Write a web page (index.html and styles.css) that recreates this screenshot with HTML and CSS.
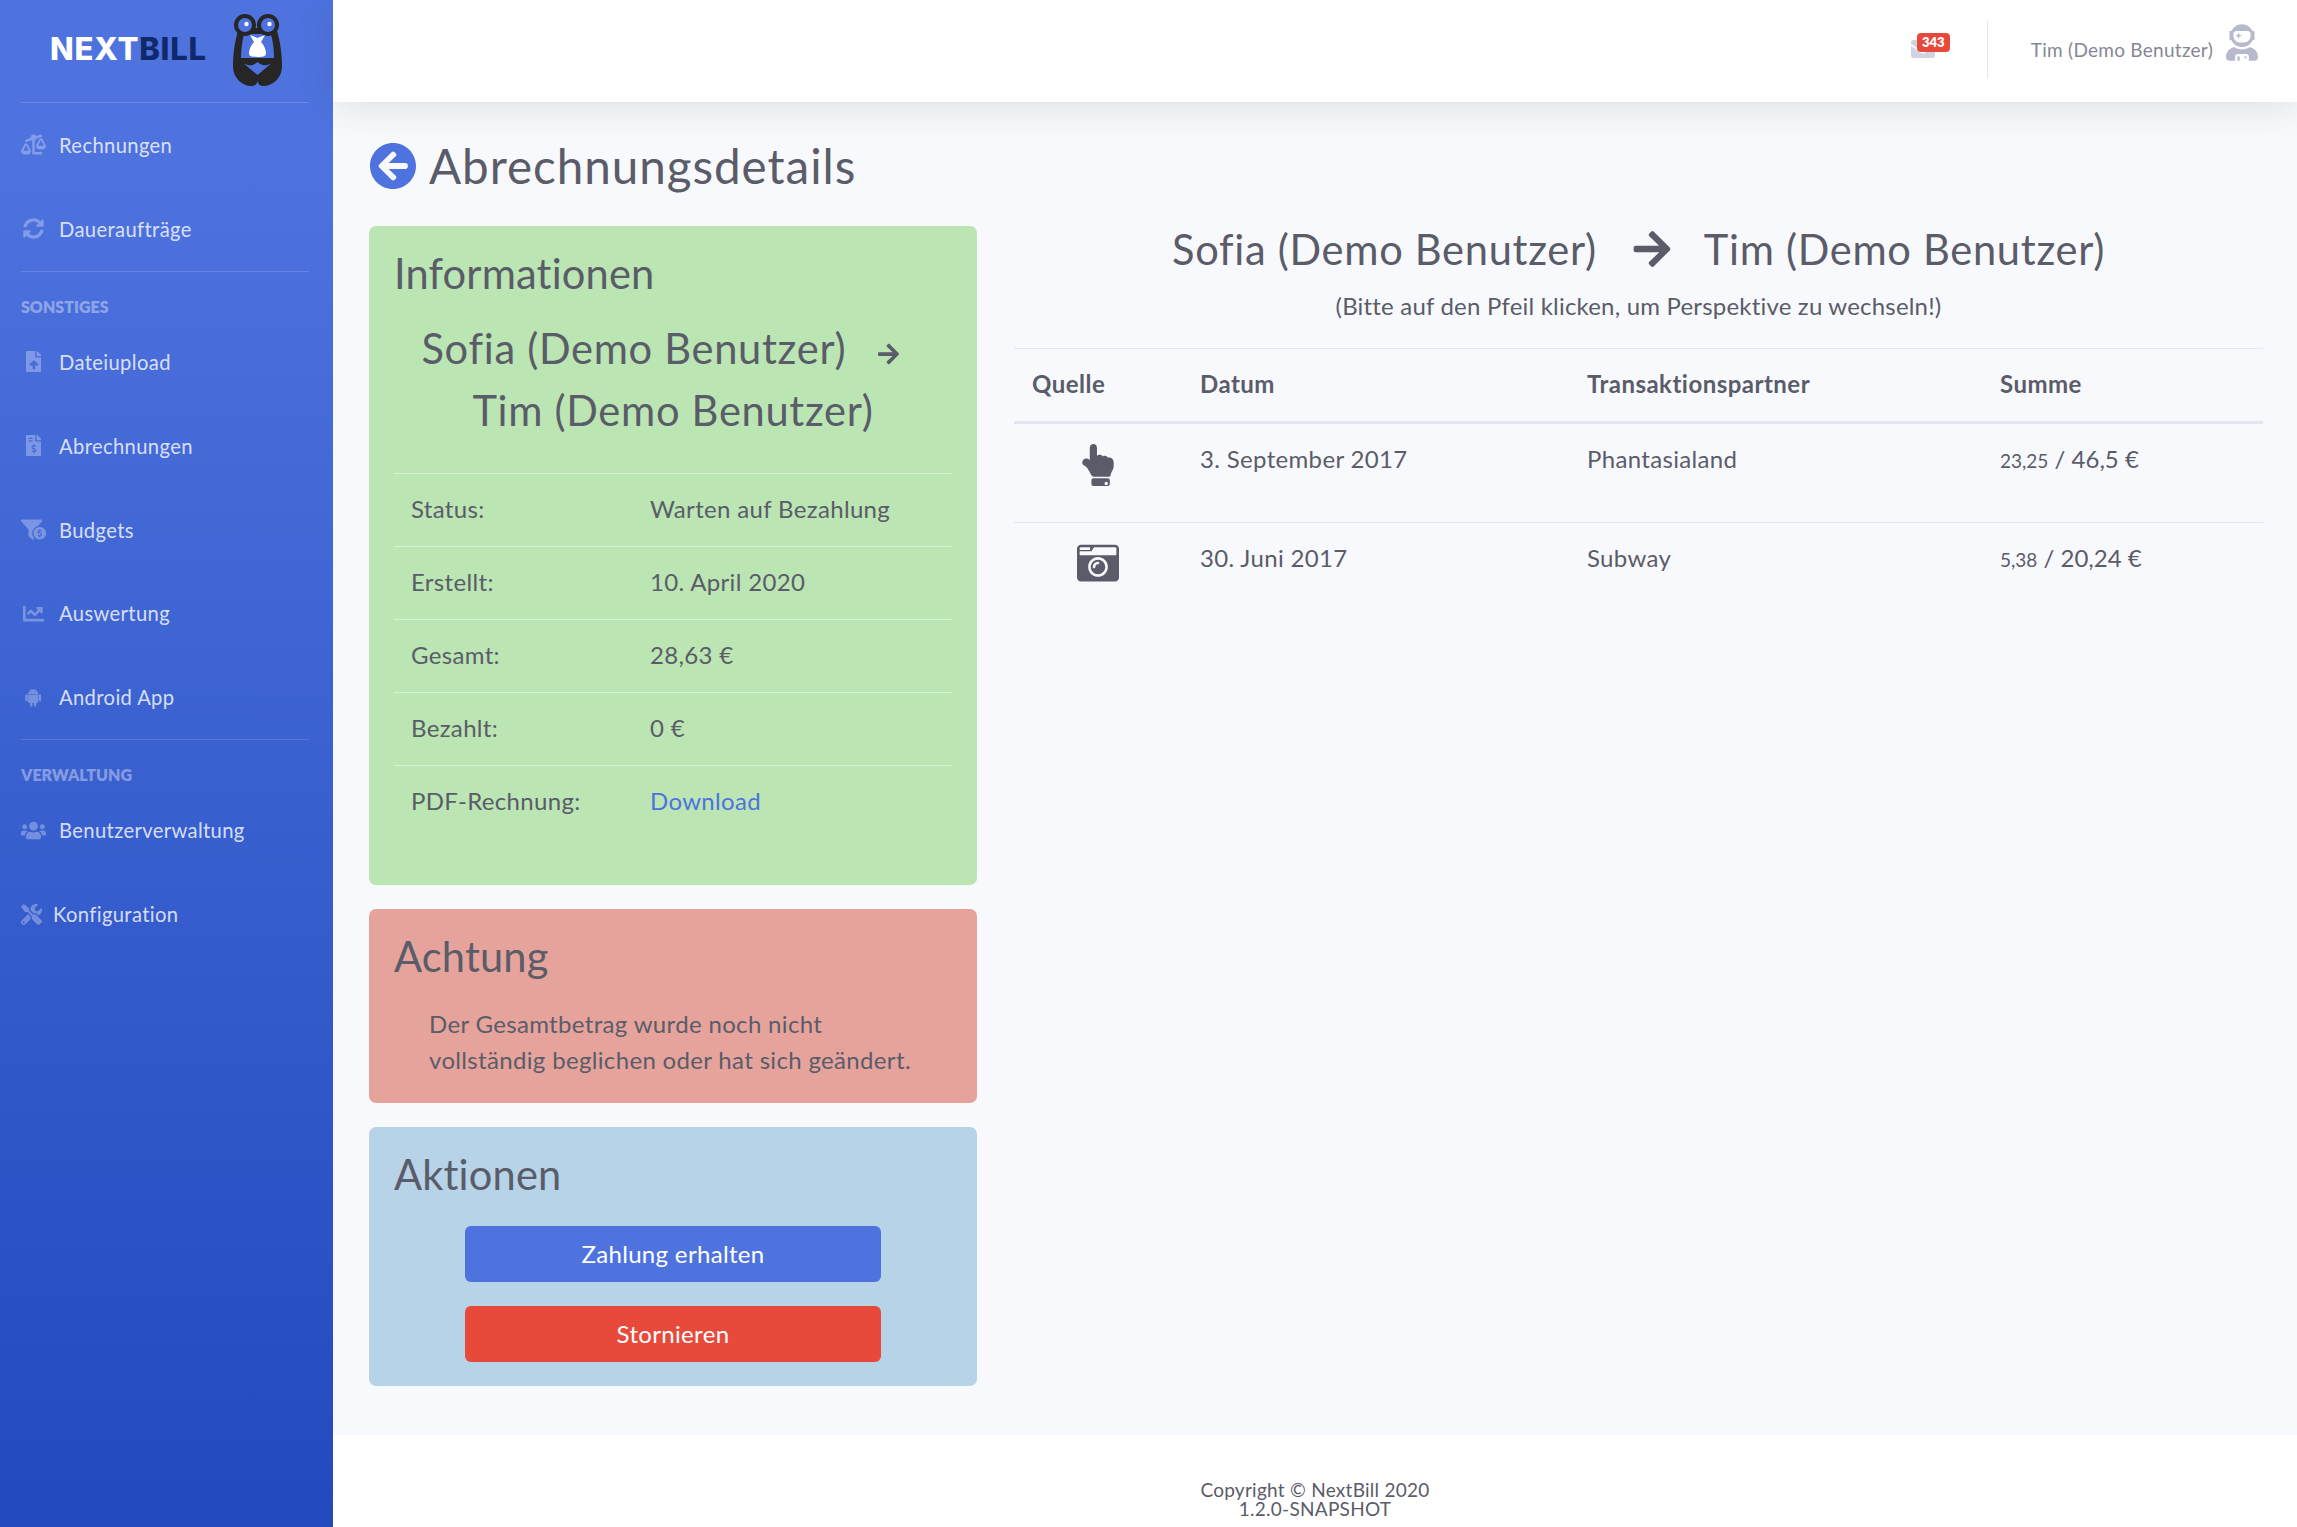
FILE: index.html
```html
<!DOCTYPE html>
<html lang="de">
<head>
  <meta charset="UTF-8">
  <meta name="viewport" content="width=device-width, initial-scale=1.0">
  <title>NextBill - Abrechnungsdetails</title>
  <link rel="stylesheet" href="styles.css">
</head>
<body>
  <div class="wrapper">
    <aside class="sidebar">
      <a class="brand" href="#">
        <span class="brand-text">NEXT<span class="brand-dark">BILL</span></span>
        <svg class="brand-logo" viewBox="0 0 49 72">
          <path class="logo-dark" d="M6 14C1 28 0 44 0 52c0 12 9 20 19 20 3 0 5-2 5.500-5 .5 3 2.500 5 5.500 5 10 0 19-8 19-20 0-8-1-24-6-38z"/>
          <path class="logo-blue" d="M11 20h27c2 8 3 16 3 24l-1 4-15.500 13L9 48l-1-4c0-8 1-16 3-24z"/>
          <path class="logo-dark" d="M6 44h37l1 4-10 3c-4 1-7-1-9.500-3-2.500 2-5.500 4-9.500 3L5 48z"/>
          <circle class="logo-dark" cx="12" cy="11" r="11"/>
          <circle class="logo-dark" cx="35" cy="11" r="11"/>
          <circle class="logo-blue" cx="12" cy="11" r="7"/>
          <circle class="logo-blue" cx="35" cy="11" r="7"/>
          <circle class="logo-white" cx="13.500" cy="10" r="2.200"/>
          <circle class="logo-white" cx="36.500" cy="10" r="2.200"/>
          <path class="logo-white" d="M17 21l7.500 3 7.500-3-4 7c3 3 5 8 5 11 0 3-2 4-8.500 4S16 42 16 39c0-3 2-8 5-11z"/>
        </svg>
      </a>
      <hr class="side-divider">
      <a class="nav-link" href="#">
        <span class="nav-icon">
          <svg viewBox="0 0 640 512"><path d="M528 448H352V153.250c20.420-8.940 36.100-26.220 43.380-47.470l132-44.260c8.380-2.810 12.890-11.880 10.080-20.260l-10.170-30.340C524.480 2.540 515.410-1.970 507.030.84L389.110 40.370C375.300 16.360 349.690 0 320 0c-44.180 0-80 35.820-80 80 0 3.430.59 6.710 1.010 10.030l-128.390 43.050c-8.380 2.810-12.890 11.880-10.080 20.260l10.170 30.340c2.810 8.380 11.880 12.890 20.260 10.080l142.050-47.630c4.070 2.770 8.430 5.120 12.990 7.120V496c0 8.840 7.160 16 16 16h224c8.840 0 16-7.160 16-16v-32c-.01-8.840-7.170-16-16.010-16zm111.980-144c0-16.180 1.340-8.730-85.050-181.510-17.650-35.290-68.190-35.360-85.870 0-87.120 174.260-85.040 165.840-85.040 181.510H384c0 44.180 57.310 80 128 80s128-35.820 128-80h-.02zM440 288l72-144 72 144H440zm-269.070-37.510c-17.650-35.290-68.190-35.360-85.870 0C-2.060 424.750.02 416.330.02 432H0c0 44.180 57.310 80 128 80s128-35.820 128-80h-.02c0-16.180 1.340-8.730-85.050-181.510zM56 416l72-144 72 144H56z"/></svg>
        </span>
        Rechnungen
      </a>
      <a class="nav-link" href="#">
        <span class="nav-icon">
          <svg viewBox="0 0 512 512"><path d="M370.720 133.280C339.458 104.008 298.888 87.962 255.848 88c-77.458.068-144.328 53.178-162.791 126.850-1.344 5.363-6.122 9.150-11.651 9.150H24.103c-7.498 0-13.194-6.807-11.807-14.176C33.933 94.924 134.813 8 256 8c66.448 0 126.791 26.136 171.315 68.685L463.030 40.970C478.149 25.851 504 36.559 504 57.941V192c0 13.255-10.745 24-24 24H345.941c-21.382 0-32.090-25.851-16.971-40.971l41.750-41.749zM32 296h134.059c21.382 0 32.090 25.851 16.971 40.971l-41.750 41.750c31.262 29.273 71.835 45.319 114.876 45.280 77.418-.07 144.315-53.144 162.787-126.849 1.344-5.363 6.122-9.150 11.651-9.150h57.304c7.498 0 13.194 6.807 11.807 14.176C478.067 417.076 377.187 504 256 504c-66.448 0-126.791-26.136-171.315-68.685L48.970 471.030C33.851 486.149 8 475.441 8 454.059V320c0-13.255 10.745-24 24-24z"/></svg>
        </span>
        Daueraufträge
      </a>
      <hr class="side-divider">
      <div class="side-heading">Sonstiges</div>
      <a class="nav-link" href="#">
        <span class="nav-icon">
          <svg viewBox="0 0 384 512"><path d="M224 136V0H24C10.700 0 0 10.700 0 24v464c0 13.300 10.700 24 24 24h336c13.300 0 24-10.700 24-24V160H248c-13.200 0-24-10.800-24-24zm65.180 216.010H224v80c0 8.840-7.160 16-16 16h-32c-8.840 0-16-7.160-16-16v-80H94.820c-14.280 0-21.410-17.290-11.270-27.360l96.420-95.700c6.650-6.610 17.390-6.610 24.040 0l96.420 95.700c10.150 10.070 3.030 27.360-11.250 27.360zM377 105L279.100 7c-4.500-4.500-10.600-7-17-7H256v128h128v-6.100c0-6.300-2.500-12.400-7-16.900z"/></svg>
        </span>
        Dateiupload
      </a>
      <a class="nav-link" href="#">
        <span class="nav-icon">
          <svg viewBox="0 0 384 512"><path d="M377 105L279.100 7c-4.500-4.500-10.600-7-17-7H256v128h128v-6.100c0-6.300-2.500-12.400-7-16.900zm-153 31V0H24C10.700 0 0 10.700 0 24v464c0 13.300 10.700 24 24 24h336c13.300 0 24-10.700 24-24V160H248c-13.200 0-24-10.800-24-24zM64 72c0-4.420 3.580-8 8-8h80c4.420 0 8 3.580 8 8v16c0 4.420-3.580 8-8 8H72c-4.420 0-8-3.580-8-8V72zm0 80v-16c0-4.420 3.580-8 8-8h80c4.420 0 8 3.580 8 8v16c0 4.420-3.580 8-8 8H72c-4.420 0-8-3.580-8-8zm144 263.880V440c0 4.420-3.580 8-8 8h-16c-4.420 0-8-3.580-8-8v-24.290c-11.290-.58-22.270-4.520-31.370-11.350-3.900-2.930-4.100-8.770-.57-12.140l11.750-11.210c2.770-2.640 6.890-2.760 10.130-.73 3.870 2.420 8.260 3.720 12.820 3.720h28.110c6.500 0 11.800-5.920 11.800-13.190 0-5.950-3.610-11.190-8.770-12.730l-45-13.500c-18.590-5.580-31.580-23.420-31.580-43.390 0-24.520 19.050-44.440 42.670-45.070V232c0-4.420 3.580-8 8-8h16c4.420 0 8 3.580 8 8v24.290c11.290.58 22.270 4.510 31.370 11.350 3.900 2.930 4.100 8.770.57 12.140l-11.750 11.210c-2.770 2.640-6.890 2.760-10.130.73-3.870-2.430-8.260-3.720-12.820-3.720h-28.110c-6.500 0-11.800 5.920-11.800 13.190 0 5.950 3.610 11.190 8.770 12.730l45 13.500c18.590 5.580 31.580 23.420 31.580 43.390 0 24.530-19.050 44.440-42.670 45.070z"/></svg>
        </span>
        Abrechnungen
      </a>
      <a class="nav-link" href="#">
        <span class="nav-icon">
          <svg viewBox="0 0 640 512"><path d="M433.460 165.940l101.200-111.870C554.610 34.120 540.480 0 512.260 0H31.740C3.520 0-10.610 34.120 9.340 54.070L192 256v155.920c0 12.590 5.930 24.440 16 32l79.990 60c20.860 15.640 48.470 6.970 59.220-13.570C310.800 455.380 288 406.350 288 352c0-89.790 62.050-165.170 145.460-186.060zM480 192c-88.370 0-160 71.630-160 160s71.630 160 160 160 160-71.630 160-160-71.630-160-160-160zm16 239.880V448c0 4.420-3.580 8-8 8h-16c-4.420 0-8-3.580-8-8v-16.290c-11.290-.58-22.270-4.520-31.370-11.350-3.900-2.930-4.100-8.770-.57-12.140l11.750-11.210c2.770-2.640 6.890-2.760 10.130-.73 3.870 2.420 8.260 3.720 12.820 3.720h28.110c6.500 0 11.800-5.920 11.800-13.190 0-5.950-3.610-11.190-8.770-12.730l-45-13.500c-18.590-5.580-31.580-23.420-31.580-43.390 0-24.520 19.050-44.440 42.670-45.070V256c0-4.420 3.580-8 8-8h16c4.420 0 8 3.580 8 8v16.290c11.290.58 22.270 4.510 31.370 11.350 3.900 2.930 4.100 8.770.57 12.140l-11.750 11.210c-2.770 2.640-6.890 2.760-10.130.73-3.870-2.430-8.260-3.720-12.820-3.720h-28.110c-6.500 0-11.800 5.920-11.800 13.190 0 5.950 3.610 11.190 8.770 12.730l45 13.500c18.590 5.580 31.580 23.420 31.580 43.390 0 24.530-19.050 44.440-42.670 45.070z"/></svg>
        </span>
        Budgets
      </a>
      <a class="nav-link" href="#">
        <span class="nav-icon">
          <svg viewBox="0 0 512 512"><path d="M496 384H64V80c0-8.840-7.160-16-16-16H16C7.160 64 0 71.160 0 80v336c0 17.670 14.330 32 32 32h464c8.840 0 16-7.160 16-16v-32c0-8.840-7.160-16-16-16zM464 96H345.940c-21.380 0-32.090 25.850-16.970 40.970l32.400 32.400L288 242.750l-73.370-73.370c-12.500-12.500-32.760-12.500-45.250 0l-68.690 68.690c-6.250 6.250-6.250 16.380 0 22.630l22.620 22.620c6.250 6.250 16.380 6.250 22.630 0L192 237.250l73.370 73.370c12.500 12.500 32.760 12.500 45.250 0l96-96 32.400 32.400c15.120 15.120 40.970 4.410 40.970-16.970V112c.01-8.840-7.150-16-15.990-16z"/></svg>
        </span>
        Auswertung
      </a>
      <a class="nav-link" href="#">
        <span class="nav-icon">
          <svg viewBox="0 0 448 512"><path d="M89.600 204.500v115.800c0 15.400-12.100 27.700-27.500 27.700-15.300 0-30.100-12.400-30.100-27.700V204.500c0-15.100 14.800-27.500 30.100-27.500 15.100 0 27.500 12.400 27.500 27.500zm10.800 157c0 16.400 13.200 29.600 29.600 29.600h19.900l.3 61.100c0 36.900 55.200 36.600 55.200 0v-61.100h37.200v61.100c0 36.700 55.500 36.800 55.500 0v-61.100h20.200c16.200 0 29.400-13.200 29.400-29.600V182.100H100.400v179.400zm248-189.100H99.300c0-42.800 25.600-80 63.600-99.400l-19.100-35.300c-2.800-4.900 4.300-8 6.700-3.800l19.400 35.600c34.900-15.500 75-14.700 108.300 0L297.500 34c2.500-4.300 9.500-1.100 6.700 3.800L285.100 73c37.700 19.400 63.300 56.600 63.300 99.400zm-170.700-55.500c0-5.700-4.600-10.500-10.500-10.500-5.700 0-10.200 4.800-10.200 10.500s4.600 10.500 10.200 10.500c5.900 0 10.500-4.800 10.500-10.500zm113.400 0c0-5.700-4.600-10.500-10.200-10.500-5.900 0-10.500 4.800-10.500 10.500s4.600 10.500 10.500 10.500c5.600 0 10.200-4.800 10.200-10.500zm94.800 60.100c-15.100 0-27.500 12.100-27.500 27.500v115.800c0 15.400 12.400 27.700 27.500 27.700 15.400 0 30.100-12.400 30.100-27.700V204.500c0-15.400-14.800-27.500-30.100-27.500z"/></svg>
        </span>
        Android App
      </a>
      <hr class="side-divider">
      <div class="side-heading">Verwaltung</div>
      <a class="nav-link" href="#">
        <span class="nav-icon">
          <svg viewBox="0 0 640 512"><path d="M96 224c35.300 0 64-28.700 64-64s-28.700-64-64-64-64 28.700-64 64 28.700 64 64 64zm448 0c35.300 0 64-28.700 64-64s-28.700-64-64-64-64 28.700-64 64 28.700 64 64 64zm32 32h-64c-17.600 0-33.500 7.100-45.100 18.600 40.300 22.100 68.900 62 75.100 109.400h66c17.700 0 32-14.300 32-32v-32c0-35.300-28.700-64-64-64zm-256 0c61.900 0 112-50.100 112-112S381.900 32 320 32 208 82.100 208 144s50.100 112 112 112zm76.800 32h-8.300c-20.800 10-43.900 16-68.500 16s-47.600-6-68.500-16h-8.300C179.600 288 128 339.600 128 403.200V432c0 26.500 21.500 48 48 48h288c26.500 0 48-21.500 48-48v-28.800c0-63.600-51.600-115.200-115.200-115.200zm-223.700-13.400C161.500 263.100 145.600 256 128 256H64c-35.300 0-64 28.700-64 64v32c0 17.700 14.300 32 32 32h65.900c6.300-47.400 34.900-87.300 75.200-109.400z"/></svg>
        </span>
        Benutzerverwaltung
      </a>
      <a class="nav-link" href="#">
        <span class="nav-icon nav-icon-narrow">
          <svg viewBox="0 0 512 512"><path d="M501.100 395.700L384 278.600c-23.100-23.100-57.600-27.600-85.400-13.900L192 158.100V96L64 0 0 64l96 128h62.100l106.600 106.600c-13.600 27.800-9.200 62.300 13.900 85.400l117.100 117.100c14.600 14.600 38.200 14.600 52.700 0l52.700-52.700c14.500-14.600 14.500-38.200 0-52.700zM331.700 225c28.300 0 54.900 11 74.900 31l19.400 19.400c15.800-6.900 30.800-16.500 43.800-29.500 37.100-37.100 49.700-89.300 37.900-136.700-2.200-9-13.500-12.100-20.100-5.500l-74.400 74.400-67.900-11.300L334 98.900l74.400-74.400c6.600-6.600 3.400-17.900-5.700-20.200-47.400-11.700-99.600.9-136.600 37.900-28.500 28.500-41.900 66.100-41.200 103.600l82.100 82.100c8.100-1.900 16.500-2.900 24.700-2.900zm-103.900 82l-56.700-56.700L18.700 402.800c-25 25-25 65.500 0 90.500s65.500 25 90.500 0l123.600-123.600c-7.600-19.900-9.900-41.600-5-62.700zM64 472c-13.200 0-24-10.800-24-24 0-13.300 10.700-24 24-24s24 10.700 24 24c0 13.200-10.700 24-24 24z"/></svg>
        </span>
        Konfiguration
      </a>
    </aside>

    <div class="content">
      <header class="topbar">
        <div class="mail">
          <svg class="mail-icon" viewBox="0 0 512 512"><path d="M502.300 190.800c3.900-3.100 9.700-.2 9.700 4.700V400c0 26.500-21.500 48-48 48H48c-26.500 0-48-21.500-48-48V195.600c0-5 5.700-7.800 9.700-4.700 22.400 17.400 52.100 39.500 154.100 113.600 21.100 15.400 56.700 47.800 92.200 47.600 35.700.3 72-32.800 92.300-47.600 102-74.100 131.600-96.300 154-113.700zM256 320c23.200.4 56.600-29.200 73.400-41.400 132.700-96.300 142.800-104.700 173.400-128.700 5.800-4.500 9.200-11.500 9.200-18.900v-19c0-26.500-21.500-48-48-48H48C21.500 64 0 85.500 0 112v19c0 7.400 3.400 14.300 9.200 18.900 30.600 23.900 40.700 32.400 173.400 128.700 16.800 12.200 50.200 41.800 73.400 41.400z"/></svg>
          <span class="badge">343</span>
        </div>
        <div class="topbar-divider"></div>
        <span class="user-name">Tim (Demo Benutzer)</span>
        <svg class="user-icon" viewBox="0 0 448 512"><path d="M64 224h13.500c24.700 56.500 80.900 96 146.500 96s121.800-39.500 146.500-96H384c8.800 0 16-7.200 16-16v-96c0-8.800-7.200-16-16-16h-13.500C345.800 39.500 289.600 0 224 0S102.200 39.500 77.500 96H64c-8.800 0-16 7.200-16 16v96c0 8.800 7.200 16 16 16zm40-88c0-22.100 21.500-40 48-40h144c26.500 0 48 17.900 48 40v24c0 53-43 96-96 96h-48c-53 0-96-43-96-96v-24zm72 72l12-36 36-12-36-12-12-36-12 36-36 12 36 12 12 36zm151.600 113.400C297.700 340.700 262.200 352 224 352s-73.700-11.300-103.600-30.600C52.900 328.500 0 385 0 454.400v9.600c0 26.500 21.500 48 48 48h80v-64c0-17.700 14.300-32 32-32h128c17.700 0 32 14.300 32 32v64h80c26.500 0 48-21.500 48-48v-9.600c0-69.400-52.900-125.900-120.400-133zM272 448c-8.800 0-16 7.200-16 16s7.200 16 16 16 16-7.200 16-16-7.200-16-16-16zm-96 0c-8.800 0-16 7.200-16 16v48h32v-48c0-8.800-7.200-16-16-16z"/></svg>
      </header>

      <main class="page">
        <h1 class="page-title">
          <svg class="back-icon" viewBox="8 8 496 496"><path d="M256 504C119 504 8 393 8 256S119 8 256 8s248 111 248 248-111 248-248 248zm28.900-143.600L209.400 288H392c13.300 0 24-10.700 24-24v-16c0-13.300-10.700-24-24-24H209.400l75.500-72.400c9.700-9.300 9.900-24.800.4-34.300l-11-10.900c-9.400-9.400-24.600-9.400-33.900 0L107.700 239c-9.400 9.400-9.400 24.600 0 33.900l132.700 132.700c9.400 9.400 24.600 9.400 33.900 0l11-10.900c9.500-9.500 9.300-25-.4-34.300z"/></svg>
          Abrechnungsdetails
        </h1>
        <div class="columns">
          <div class="left-col">
            <section class="box box-green">
              <h2 class="box-title">Informationen</h2>
              <div class="parties">
                Sofia (Demo Benutzer)
                <svg class="parties-arrow" viewBox="0 0 448 512"><path d="M190.500 66.900l22.200-22.200c9.400-9.400 24.600-9.400 33.900 0L441 239c9.400 9.400 9.400 24.600 0 33.900L246.600 467.300c-9.400 9.400-24.600 9.400-33.900 0l-22.200-22.200c-9.500-9.500-9.300-25 .4-34.300L311.400 296H24c-13.300 0-24-10.700-24-24v-32c0-13.300 10.700-24 24-24h287.400L190.900 101.200c-9.800-9.300-10-24.800-.4-34.300z"/></svg>
                <br>
                Tim (Demo Benutzer)
              </div>
              <table class="info-table">
                <tr><td>Status:</td><td>Warten auf Bezahlung</td></tr>
                <tr><td>Erstellt:</td><td>10. April 2020</td></tr>
                <tr><td>Gesamt:</td><td>28,63 €</td></tr>
                <tr><td>Bezahlt:</td><td>0 €</td></tr>
                <tr><td>PDF-Rechnung:</td><td><a class="link" href="#">Download</a></td></tr>
              </table>
            </section>
            <section class="box box-red">
              <h2 class="box-title">Achtung</h2>
              <p class="box-text">Der Gesamtbetrag wurde noch nicht<br>vollständig beglichen oder hat sich geändert.</p>
            </section>
            <section class="box box-blue">
              <h2 class="box-title">Aktionen</h2>
              <a class="btn btn-primary" href="#">Zahlung erhalten</a>
              <a class="btn btn-danger" href="#">Stornieren</a>
            </section>
          </div>

          <div class="right-col">
            <div class="direction">
              <span>Sofia (Demo Benutzer)</span>
              <svg class="direction-arrow" viewBox="0 0 448 512"><path d="M190.500 66.900l22.200-22.200c9.400-9.400 24.600-9.400 33.900 0L441 239c9.400 9.400 9.400 24.600 0 33.900L246.600 467.300c-9.400 9.400-24.600 9.400-33.900 0l-22.200-22.200c-9.500-9.500-9.300-25 .4-34.300L311.400 296H24c-13.300 0-24-10.700-24-24v-32c0-13.300 10.700-24 24-24h287.400L190.900 101.200c-9.800-9.300-10-24.800-.4-34.300z"/></svg>
              <span>Tim (Demo Benutzer)</span>
            </div>
            <p class="direction-hint">(Bitte auf den Pfeil klicken, um Perspektive zu wechseln!)</p>
            <table class="bills">
              <thead>
                <tr><th class="col-source">Quelle</th><th class="col-date">Datum</th><th class="col-partner">Transaktionspartner</th><th>Summe</th></tr>
              </thead>
              <tbody>
                <tr>
                  <td class="source-cell">
                    <svg class="source-hand" viewBox="0 0 384 512"><path d="M135.652 0c23.625 0 43.826 20.650 43.826 44.800v99.851c17.048-16.340 49.766-18.346 70.944 6.299 22.829-14.288 53.017-2.147 62.315 16.450C361.878 158.426 384 189.346 384 240c0 2.746-.203 13.276-.195 16 .168 61.971-31.065 76.894-38.315 123.731C343.683 391.404 333.599 400 321.786 400H150.261l-.001-.002c-18.366-.011-35.889-10.607-43.845-28.464C93.421 342.648 57.377 276.122 29.092 264 10.897 256.203.008 242.616 0 224c-.014-34.222 35.098-57.752 66.908-44.119 8.359 3.583 16.670 8.312 24.918 14.153V44.800c0-23.450 20.543-44.800 43.826-44.800zM136 416h176c13.255 0 24 10.745 24 24v48c0 13.255-10.745 24-24 24H136c-13.255 0-24-10.745-24-24v-48c0-13.255 10.745-24 24-24zm156 84c11.046 0 20-8.954 20-20s-8.954-20-20-20-20 8.954-20 20 8.954 20 20 20z"/></svg>
                  </td>
                  <td>3. September 2017</td>
                  <td>Phantasialand</td>
                  <td class="sum-cell"><small>23,25</small> / 46,5 €</td>
                </tr>
                <tr>
                  <td class="source-cell">
                    <svg class="source-camera" viewBox="0 32 512 448"><path d="M48 32C21.500 32 0 53.500 0 80v352c0 26.500 21.500 48 48 48h416c26.500 0 48-21.500 48-48V80c0-26.500-21.500-48-48-48H48zm0 32h106c3.300 0 6 2.700 6 6v20c0 3.300-2.700 6-6 6H38c-3.300 0-6-2.700-6-6V80c0-8.800 7.200-16 16-16zm426 96H38c-3.300 0-6-2.700-6-6v-36c0-3.300 2.700-6 6-6h138l30.200-45.300c1.100-1.700 3-2.700 5-2.700H464c8.800 0 16 7.200 16 16v74c0 3.300-2.700 6-6 6zM256 424c-66.200 0-120-53.800-120-120s53.800-120 120-120 120 53.800 120 120-53.800 120-120 120zm0-208c-48.500 0-88 39.500-88 88s39.500 88 88 88 88-39.500 88-88-39.500-88-88-88zm-48 104c-8.800 0-16-7.200-16-16 0-35.300 28.700-64 64-64 8.800 0 16 7.200 16 16s-7.200 16-16 16c-17.600 0-32 14.400-32 32 0 8.800-7.200 16-16 16z"/></svg>
                  </td>
                  <td>30. Juni 2017</td>
                  <td>Subway</td>
                  <td class="sum-cell"><small>5,38</small> / 20,24 €</td>
                </tr>
              </tbody>
            </table>
          </div>
        </div>
      </main>

      <footer class="footer">
        Copyright © NextBill 2020<br>
        1.2.0-SNAPSHOT
      </footer>
    </div>
  </div>
</body>
</html>
```

FILE: styles.css
```css
* { box-sizing: border-box; letter-spacing: 0.014em; }
body { margin: 0; font-family: "Lato", "Noto Sans", sans-serif; font-size: 24px; line-height: 36px; color: #5a5c69; background: #f8f9fc; }
a { text-decoration: none; }
svg { display: block; fill: currentColor; }
.wrapper { display: flex; height: 1527px; overflow: hidden; }

/* sidebar */
.sidebar { width: 333px; flex: none; background: linear-gradient(180deg, #4e73df 10%, #224abe 100%); }
.brand { height: 102px; display: flex; padding: 14px 0 0 50px; color: #fff; }
.brand-text { font-family: "Inter", sans-serif; font-weight: 800; font-size: 31px; line-height: 48px; letter-spacing: 0.8px; width: 183px; margin-top: 11px; }
.brand-dark { color: #10296b; letter-spacing: 0.8px; }
.brand-logo { width: 49px; height: 72px; }
.logo-dark { fill: #262626; }
.logo-blue { fill: #4e73df; }
.logo-white { fill: #fff; }
.side-divider { margin: 0 24px 0 21px; border: 0; border-top: 1px solid rgba(255, 255, 255, 0.15); }
.nav-link { height: 83.900px; display: flex; align-items: center; padding-left: 21px; font-size: 20.200px; letter-spacing: 0.018em; color: rgba(255, 255, 255, 0.8); }
.nav-icon { width: 38px; flex: none; display: flex; justify-content: center; padding-right: 13px; color: rgba(255, 255, 255, 0.3); }
.nav-icon svg { height: 21px; }
.nav-icon-narrow { width: 32px; padding-right: 11px; }
.side-heading { height: 48px; padding: 24px 0 0 21px; font-size: 16px; line-height: 22px; font-weight: 800; letter-spacing: 0; text-transform: uppercase; color: rgba(255, 255, 255, 0.4); }

/* topbar */
.content { flex: 1; display: flex; flex-direction: column; min-width: 0; }
.topbar { height: 102px; flex: none; display: flex; align-items: center; justify-content: flex-end; padding-right: 39px; background: #fff; box-shadow: 0 3px 36px rgba(58, 59, 69, 0.15); position: relative; }
.mail { position: relative; width: 24px; margin-right: 52px; }
.mail-icon { width: 24px; height: 24px; color: #d1d3e2; position: relative; top: -2px; }
.badge { position: absolute; left: 6px; top: -6px; width: 33px; height: 19px; border-radius: 4px; background: #e74a3b; color: #fff; font-size: 13px; line-height: 19px; font-weight: 800; letter-spacing: 0; text-align: center; }
.topbar-divider { width: 1px; height: 57px; background: #e3e6f0; margin: -4px 43px 0 0; }
.user-name { font-size: 19px; color: #858796; margin: -3px 13px 0 0; }
.user-icon { width: 32px; height: 37px; color: #b7b9cc; margin-top: -17px; }

/* page */
.page { flex: 1; padding: 39px 34px 0 36px; }
.page-title { display: flex; align-items: center; gap: 13px; margin: 0 0 36px; height: 49px; font-size: 47.600px; line-height: 49px; font-weight: 400; letter-spacing: 0.02em; }
.back-icon { width: 46px; height: 46px; margin-left: 1px; color: #4e73df; }
.columns { display: flex; gap: 37px; align-items: flex-start; }
.left-col { width: 608px; flex: none; }
.right-col { flex: 1; min-width: 0; }

/* colored boxes */
.box { border-radius: 7px; padding: 22px 25px 24px 25px; margin-bottom: 24px; }
.box-green { background: #bbe5b2; height: 659px; }
.box-red { background: #e6a39b; height: 194px; }
.box-blue { background: #b6d3e7; height: 259px; }
.box-title { margin: 0; font-size: 41.600px; line-height: 50px; font-weight: 400; letter-spacing: 0.004em; }
.parties { margin-top: 19px; text-align: center; font-size: 41.600px; line-height: 62px; letter-spacing: 0.017em; }
.parties-arrow { display: inline-block; width: 21px; height: 24px; margin: 0 26px 0 20px; vertical-align: -2px; }
.info-table { width: 100%; margin-top: 32px; border-collapse: collapse; }
.info-table td { height: 73px; padding: 0 18px 2px 17px; border-top: 1px solid rgba(255, 255, 255, 0.45); }
.info-table td:first-child { width: 239px; }
.link { color: #4e73df; }
.box-text { margin: 25px 0 0 35px; }
.btn { display: block; width: 416px; height: 56px; margin: 0 auto 24px; border-radius: 6px; color: #fff; text-align: center; line-height: 56px; }
.box-blue .box-title { margin-bottom: 27px; }
.btn-primary { background: #4e73df; }
.btn-danger { background: #e74a3b; }

/* right side */
.direction { display: flex; justify-content: center; align-items: center; gap: 36px; height: 46px; font-size: 41.600px; line-height: 46px; }
.direction span { letter-spacing: 0.017em; }
.direction-arrow { width: 38px; height: 42px; margin-right: -3px; }
.direction-hint { margin: 16px 0 24px; text-align: center; letter-spacing: 0.008em; }
.bills { width: 100%; border-collapse: collapse; }
.bills th { height: 74px; padding: 0 18px 2px; text-align: left; font-weight: 700; letter-spacing: 0.02em; border-top: 1px solid #e3e6f0; border-bottom: 3px solid #e3e6f0; }
.bills td { height: 100px; padding: 17px 18px 0; vertical-align: top; border-bottom: 1px solid #e3e6f0; }
.bills tr:last-child td { border-bottom: 0; }
.bills .sum-cell { letter-spacing: 0; }
.bills small { font-size: 19px; letter-spacing: 0; }
.col-source { width: 168px; }
.col-date { width: 387px; }
.col-partner { width: 413px; }
.source-hand { width: 32px; height: 42px; margin: 3px auto 0; }
.source-camera { width: 42px; height: 38px; margin: 4px auto 0; }

/* footer */
.footer { height: 92px; flex: none; padding-top: 45px; background: #fff; text-align: center; font-size: 19px; line-height: 19px; }
```
